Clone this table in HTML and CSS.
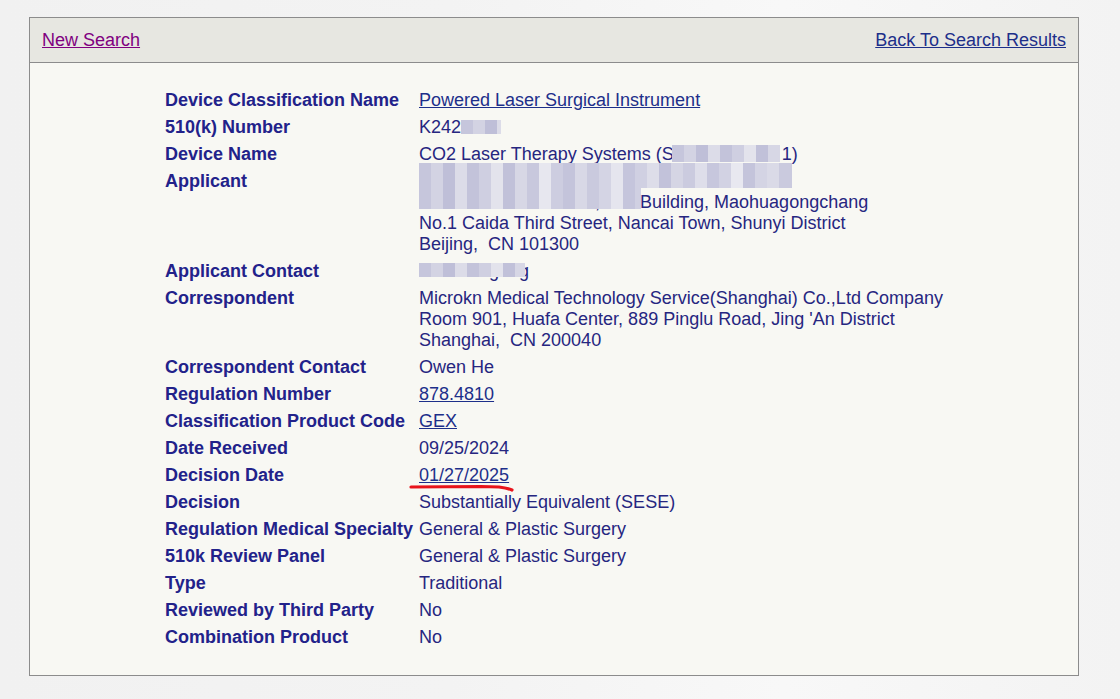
FILE: index.html
```html
<!DOCTYPE html>
<html>
<head>
<meta charset="utf-8">
<link rel="stylesheet" href="styles.css">
</head>
<body>
<div class="box">
  <div class="bar">
    <a href="#" class="visited">New Search</a>
    <a href="#">Back To Search Results</a>
  </div>
  <div class="content">
    <table class="info">
      <tr><th>Device Classification Name</th><td><a href="#">Powered Laser Surgical Instrument</a></td></tr>
      <tr><th>510(k) Number</th><td class="rel">K242<span class="blur b1"></span></td></tr>
      <tr><th>Device Name</th><td class="rel">CO2 Laser Therapy Systems (S<span class="gap"></span>1)<span class="blur b2"></span></td></tr>
      <tr><th>Applicant</th><td class="rel">.<br>F<span class="gap2"></span>, .on. Building, Maohuagongchang<br>No.1 Caida Third Street, Nancai Town, Shunyi District<br>Beijing,&nbsp; CN 101300<span class="blur b3"></span><span class="blur b4"></span></td></tr>
      <tr><th>Applicant Contact</th><td class="rel"><span class="gap3"></span>gong<span class="blur b5"></span></td></tr>
      <tr><th>Correspondent</th><td>Microkn Medical Technology Service(Shanghai) Co.,Ltd Company<br>Room 901, Huafa Center, 889 Pinglu Road, Jing 'An District<br>Shanghai,&nbsp; CN 200040</td></tr>
      <tr><th>Correspondent Contact</th><td>Owen He</td></tr>
      <tr><th>Regulation Number</th><td><a href="#">878.4810</a></td></tr>
      <tr><th>Classification Product Code</th><td><a href="#">GEX</a></td></tr>
      <tr><th>Date Received</th><td>09/25/2024</td></tr>
      <tr><th>Decision Date</th><td class="rel"><a href="#">01/27/2025</a><svg class="mark" width="112" height="12" viewBox="0 0 112 12"><path d="M2 5 L72 4.5 L90 5 Q98 6 103 8" stroke="#e8141c" stroke-width="3.2" fill="none" stroke-linecap="round"/></svg></td></tr>
      <tr><th>Decision</th><td>Substantially Equivalent (SESE)</td></tr>
      <tr><th>Regulation Medical Specialty</th><td>General &amp; Plastic Surgery</td></tr>
      <tr><th>510k Review Panel</th><td>General &amp; Plastic Surgery</td></tr>
      <tr><th>Type</th><td>Traditional</td></tr>
      <tr><th>Reviewed by Third Party</th><td>No</td></tr>
      <tr><th>Combination Product</th><td>No</td></tr>
    </table>
  </div>
</div>
</body>
</html>
```
FILE: styles.css
```css
html, body {
  margin: 0;
  padding: 0;
}
body {
  background: linear-gradient(90deg, #f1f1f1 0%, #f3f3f3 40%, #f8f8f8 70%, #f3f3f3 100%);
  font-family: "Liberation Sans", Arial, sans-serif;
  font-size: 18px;
  height: 699px;
  padding-top: 17px;
  box-sizing: border-box;
}
.box {
  margin-left: 29px;
  width: 1050px;
  box-sizing: border-box;
  border: 1px solid #8c8c8c;
  background: #f8f8f3;
}
.bar {
  background: #e7e7e1;
  border-bottom: 1px solid #8c8c8c;
  height: 45px;
  box-sizing: border-box;
  padding: 0 12px 0 12px;
  display: flex;
  justify-content: space-between;
  align-items: center;
  line-height: 21px;
}
.bar a {
  color: #1d2f8a;
  text-decoration: underline;
}
.bar a.visited {
  color: #800080;
}
.content {
  padding: 24px 0 24px 132px;
}
.info {
  border-collapse: collapse;
}
.info th, .info td {
  padding: 3px 0;
  line-height: 21px;
  vertical-align: top;
  text-align: left;
}
.info th {
  color: #22228a;
  font-weight: bold;
  width: 254px;
  padding-left: 3px;
  white-space: nowrap;
}
.info td {
  color: #262680;
}
.info td a {
  color: #1d2f8a;
}
.rel {
  position: relative;
}
.gap { display: inline-block; width: 108px; }
.gap2 { display: inline-block; width: 165px; }
.gap3 { display: inline-block; width: 70px; }
.blur {
  position: absolute;
  background:
    linear-gradient(90deg,
      #c6c6dc 0 12px, #d3d3e3 12px 24px, #bfbfd8 24px 36px, #dcdce8 36px 48px,
      #c3c3da 48px 60px, #cfcfe1 60px 72px, #e3e3ec 72px 84px, #c1c1d9 84px 96px,
      #d7d7e5 96px 108px, #c8c8dd 108px 120px, #e7e7ef 120px 132px, #cdcde0 132px 144px,
      #c4c4db 144px 156px, #d8d8e6 156px 168px, #cacade 168px 180px, #d4d4e4 180px 192px,
      #e5e5ee 192px 204px, #c5c5dc 204px 216px, #d0d0e2 216px 228px, #dddde9 228px 240px,
      #c2c2da 240px 252px, #d5d5e4 252px 264px, #cbcbdf 264px 276px, #dedeea 276px 288px,
      #c7c7dd 288px 300px, #d2d2e3 300px 312px, #e8e8f0 312px 324px, #c4c4db 324px 336px,
      #d4d4e4 336px 348px, #dadae7 348px 360px, #cacade 360px 372px);
}
.b1 { left: 42px; top: 6px; width: 40px; height: 14px; }
.b2 { left: 253px; top: 4px; width: 108px; height: 17px; }
.b3 { left: 0; top: -5px; width: 373px; height: 25px; }
.b4 { left: 0; top: 20px; width: 222px; height: 21px; }
.b5 { left: 0; top: 5px; width: 106px; height: 14px; }
.mark {
  position: absolute;
  left: -10px;
  top: 20px;
}
```
